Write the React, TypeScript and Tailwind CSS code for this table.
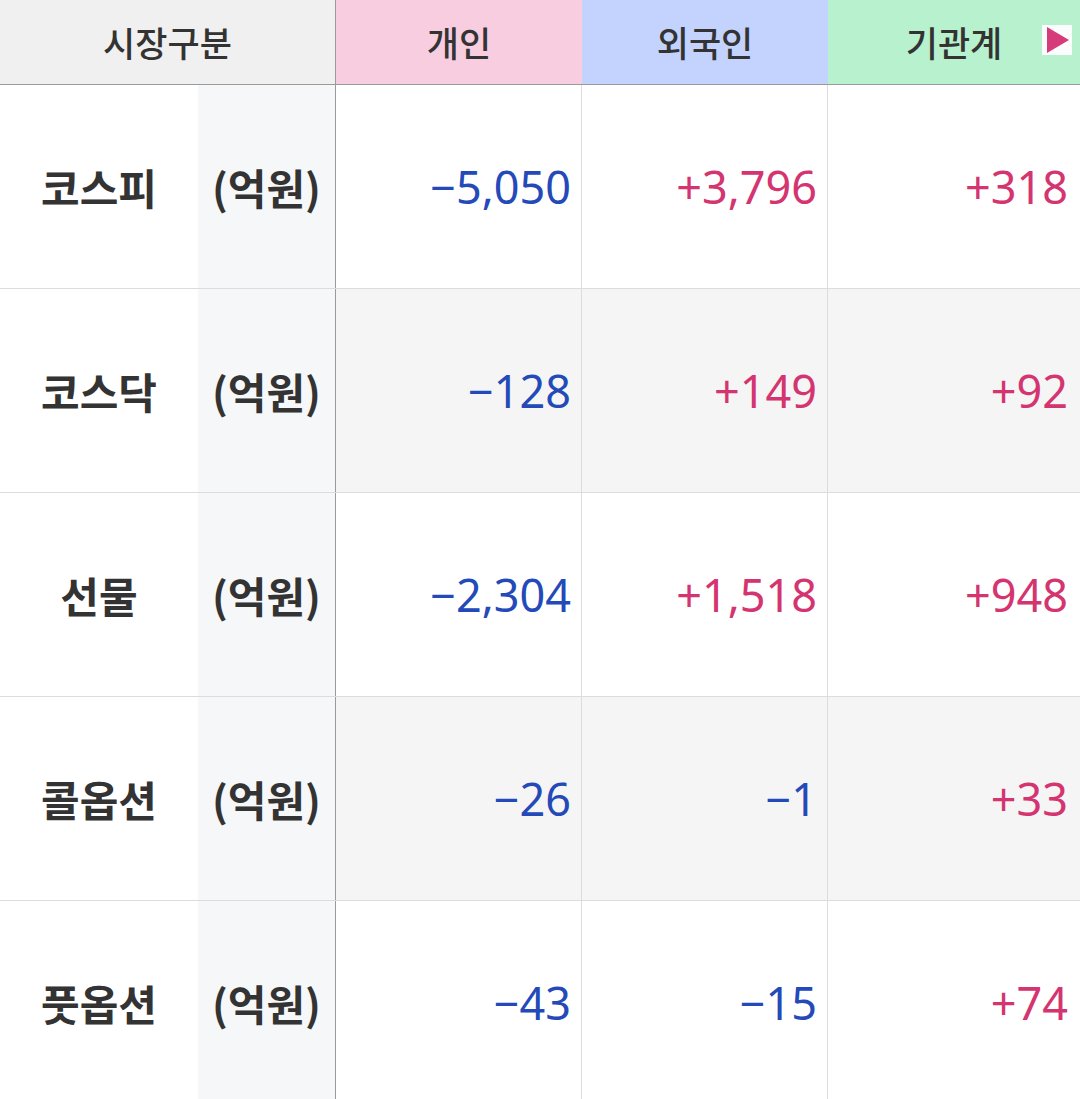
import React from 'react'

type Row = {
  name: string
  values: string[]
}

const rows: Row[] = [
  { name: '코스피', values: ['−5,050', '+3,796', '+318'] },
  { name: '코스닥', values: ['−128', '+149', '+92'] },
  { name: '선물', values: ['−2,304', '+1,518', '+948'] },
  { name: '콜옵션', values: ['−26', '−1', '+33'] },
  { name: '풋옵션', values: ['−43', '−15', '+74'] },
]

const font = { fontFamily: '"Noto Sans CJK KR", "Noto Sans", sans-serif' }
const numFont = { fontFamily: '"Noto Sans", "Noto Sans CJK KR", sans-serif' }

const App: React.FC = () => {
  return (
    <div className="w-[1080px] h-[1099px] overflow-hidden bg-white text-[#333]" style={font}>
      <div className="grid grid-cols-[198px_138px_246px_246px_252px] h-[85px] border-b border-[#9a9a9a]">
        <div className="col-span-2 flex items-center justify-center bg-[#f0f0f0] border-r border-[#9a9a9a] text-[35px] font-medium">
          시장구분
        </div>
        <div className="flex items-center justify-center bg-[#f8cde0] text-[35px] font-medium">개인</div>
        <div className="flex items-center justify-center bg-[#c3d3fe] text-[35px] font-medium">외국인</div>
        <div className="relative flex items-center justify-center bg-[#b7f1cd] text-[35px] font-medium">
          기관계
          <div className="absolute right-[8px] top-[25px] w-[30px] h-[30px] bg-[#fbfdfc] flex items-center justify-center">
            <svg width="26" height="28" viewBox="0 0 26 28">
              <path d="M3 1 L25 14 L3 27 Z" fill="#d63b7a" />
            </svg>
          </div>
        </div>
      </div>

      {rows.map((row, i) => {
        const shaded = i % 2 === 1
        return (
          <div
            key={row.name}
            className="grid grid-cols-[198px_138px_246px_246px_252px] h-[204px] border-b border-[#dcdcdc]"
          >
            <div className="flex items-center justify-center bg-white text-[42px] font-bold">{row.name}</div>
            <div className="flex items-center justify-center bg-[#f5f7f9] border-r border-[#9a9a9a] text-[42px] font-semibold">
              (억원)
            </div>
            {row.values.map((v, j) => (
              <div
                key={j}
                style={numFont}
                className={`flex items-center justify-end text-[45px] leading-none ${
                  j < 2 ? 'pr-[10px] border-r border-[#dcdcdc]' : 'pr-[12px]'
                } ${shaded ? 'bg-[#f5f5f5]' : 'bg-white'} ${
                  v.startsWith('+') ? 'text-[#d4346f]' : 'text-[#2449b8]'
                }`}
              >
                {v}
              </div>
            ))}
          </div>
        )
      })}
    </div>
  )
}

export default App
